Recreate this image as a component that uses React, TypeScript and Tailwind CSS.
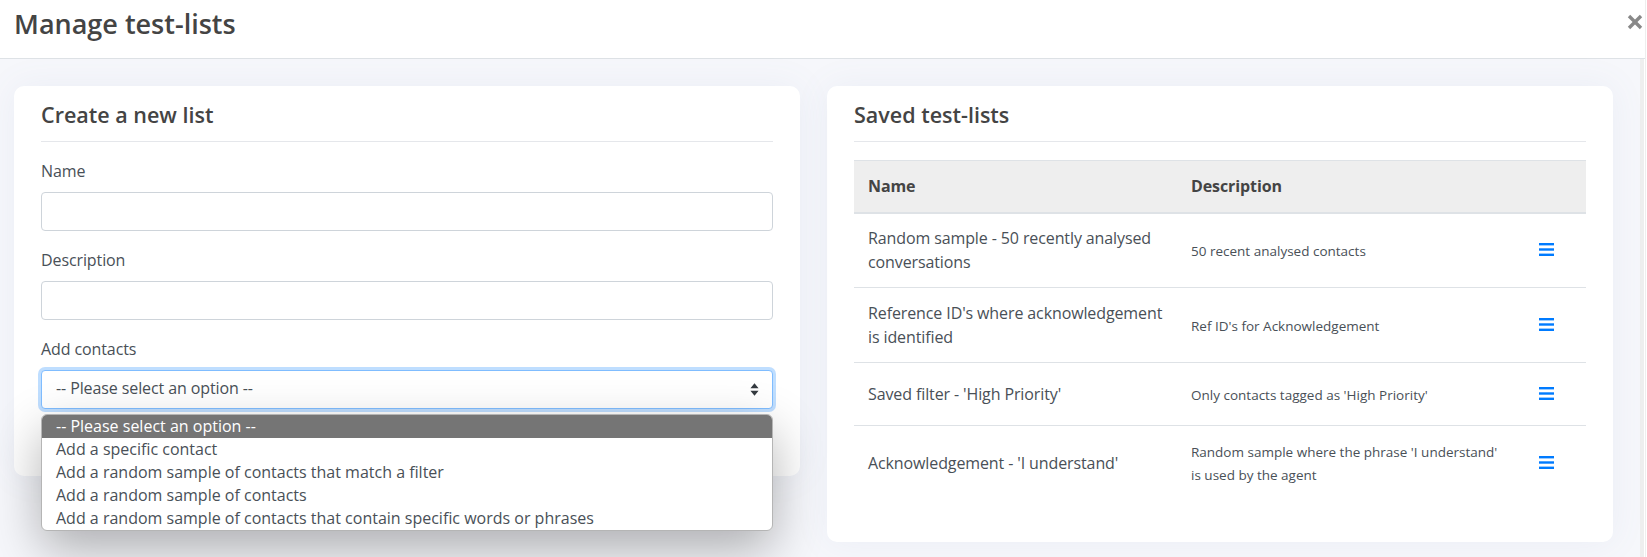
import { X } from 'lucide-react'

const rows = [
  { name: 'Random sample - 50 recently analysed conversations', desc: '50 recent analysed contacts', h: 'h-[75px]' },
  { name: "Reference ID's where acknowledgement is identified", desc: "Ref ID's for Acknowledgement", h: 'h-[75px]' },
  { name: "Saved filter - 'High Priority'", desc: "Only contacts tagged as 'High Priority'", h: 'h-[63px]' },
  { name: "Acknowledgement - 'I understand'", desc: "Random sample where the phrase 'I understand' is used by the agent", h: 'h-[74px]' },
]

const options = [
  'Add a specific contact',
  'Add a random sample of contacts that match a filter',
  'Add a random sample of contacts',
  'Add a random sample of contacts that contain specific words or phrases',
]

function Field({ label }: { label: string }) {
  return (
    <div className="mb-[18px]">
      <div className="mb-[10px] h-[22px] text-[16px] leading-[22px] tracking-[-0.1px]">{label}</div>
      <div className="h-[39px] rounded-[4px] border border-[#ced4da] bg-white" />
    </div>
  )
}

export default function App() {
  return (
    <div className="flex h-[557px] w-[1647px] overflow-hidden bg-white font-['Open_Sans',sans-serif] text-[#495057]">
      <div className="h-full w-[1646px] border-r border-[#eeeeee]">
        <div className="flex h-[59px] items-start justify-between border-b border-[#dee2e6] bg-white">
          <h1 className="pl-[14px] pt-[6px] text-[27px] font-semibold leading-[36px] text-[#444]">Manage test-lists</h1>
          <X className="mr-[-2px] mt-[10px] h-6 w-6 text-[#888]" strokeWidth={3.4} strokeLinecap="butt" />
        </div>

        <div className="mr-px flex h-[498px] items-start gap-[27px] border-r-4 border-[#eeeeee] bg-[#f6f7fb] pl-[14px] pt-[27px]">
          <div className="relative h-[390px] w-[786px] rounded-[10px] bg-white px-[27px] pt-[12px] shadow-[0_0_35px_rgba(100,130,180,0.08)]">
            <div className="h-[44px] border-b border-[#e5e7eb] pt-[2px] text-[21.5px] font-semibold leading-[30px] text-[#444]">Create a new list</div>
            <div className="pt-[18px]">
              <Field label="Name" />
              <Field label="Description" />
              <div className="mb-[10px] h-[22px] text-[16px] leading-[22px] tracking-[-0.1px]">Add contacts</div>
              <div className="flex h-[39px] items-center justify-between rounded-[4px] border border-[#80bdff] bg-white pb-[3px] pl-[14px] pr-[13px] text-[16px] tracking-[-0.1px] shadow-[0_0_0_3px_rgba(0,123,255,0.25)]">
                <span>-- Please select an option --</span>
                <svg viewBox="0 0 10 14" className="mt-[2px] h-[13px] w-[9px] fill-[#343a40]">
                  <path d="M5 0 9.5 5.6H.5zM5 14 .5 8.4h9z" />
                </svg>
              </div>
            </div>

            <div className="absolute left-[27px] top-[328px] w-[732px] overflow-hidden rounded-[6px] border border-[#b5b5b5] bg-white text-[16px] leading-[23px] shadow-[0_18px_50px_rgba(0,0,0,0.3)]">
              <div className="h-[23px] bg-[#757575] pl-[14px] text-white">-- Please select an option --</div>
              {options.map((o) => (
                <div key={o} className="h-[23px] pl-[14px]">{o}</div>
              ))}
            </div>
          </div>

          <div className="h-[456px] w-[786px] rounded-[10px] bg-white px-[27px] pt-[12px] shadow-[0_0_35px_rgba(100,130,180,0.08)]">
            <div className="h-[44px] border-b border-[#e5e7eb] pt-[2px] text-[21.5px] font-semibold leading-[30px] text-[#444]">Saved test-lists</div>
            <table className="mt-[18px] w-[732px] table-fixed border-collapse">
              <thead>
                <tr className="h-[52px] border-t border-b-2 border-[#dee2e6] bg-[#eeeeee] text-left text-[16px] font-bold tracking-[-0.1px] text-[#444]">
                  <th className="w-[323px] pl-[14px]">Name</th>
                  <th className="pl-[14px]">Description</th>
                  <th className="w-[70px]" />
                </tr>
              </thead>
              <tbody>
                {rows.map((r, i) => (
                  <tr key={r.name} className={`${r.h} ${i < 3 ? 'border-b border-[#dee2e6]' : ''}`}>
                    <td className="pl-[14px] pr-[8px] text-[16px] leading-[24px] tracking-[-0.11px]">{r.name}</td>
                    <td className="pl-[14px] pr-[14px] pt-[2px] text-[13.5px] leading-[23px]">{r.desc}</td>
                    <td>
                      <svg viewBox="0 0 15 13" className="mb-[1px] ml-[23px] h-[13px] w-[15px] fill-[#007bff]">
                        <rect y="0" width="15" height="2.4" />
                        <rect y="5.3" width="15" height="2.4" />
                        <rect y="10.6" width="15" height="2.4" />
                      </svg>
                    </td>
                  </tr>
                ))}
              </tbody>
            </table>
          </div>
        </div>
      </div>
    </div>
  )
}
